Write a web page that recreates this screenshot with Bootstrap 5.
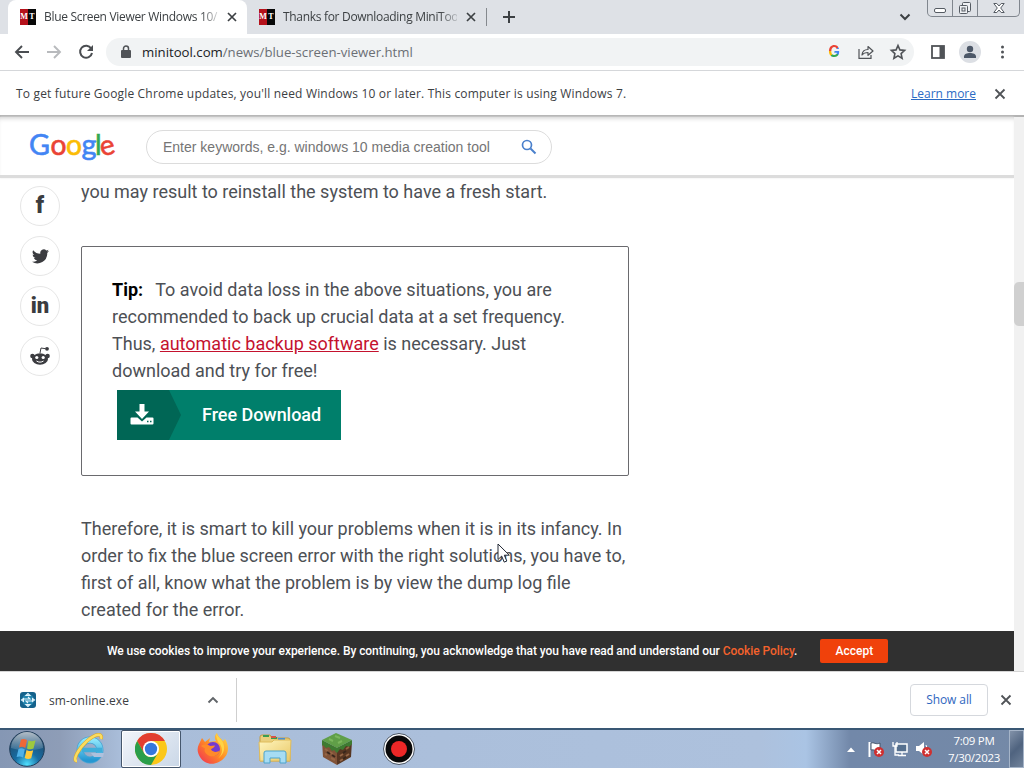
<!DOCTYPE html>
<html lang="en">

<head>
    <meta charset="UTF-8">
    <meta name="viewport" content="width=device-width, initial-scale=1.0">
    <title>Blue Screen Viewer Windows 10</title>
    <!-- Bootstrap CSS -->
    <link href="https://cdn.jsdelivr.net/npm/bootstrap@5.3.2/dist/css/bootstrap.min.css" rel="stylesheet">
    <style>
        body {
            width: 1024px;
            height: 768px;
            overflow: hidden;
            font-family: "Open Sans", "Noto Sans", sans-serif;
            font-size: 12px;
            line-height: 18px;
            color: #3c4043;
            background: #fff;
        }

        svg {
            display: block;
            flex: none;
        }

        /* Tabs */
        .tab-strip {
            height: 34px;
            background: #dee1e6;
            padding-left: 8px;
        }

        .tab-item {
            width: 239px;
            padding: 0 8px 0 12px;
        }

        .tab-item.is-active {
            background: #fff;
            border-radius: 8px 8px 0 0;
        }

        .tab-title {
            width: 174px;
            margin-left: 8px;
            white-space: nowrap;
            letter-spacing: -.31px;
            -webkit-mask-image: linear-gradient(90deg, #000 90%, rgba(0, 0, 0, .2));
            mask-image: linear-gradient(90deg, #000 90%, rgba(0, 0, 0, .2));
        }

        .favicon {
            width: 16px;
            height: 16px;
            flex: none;
            background: linear-gradient(90deg, #b5121b 50%, #080808 50%);
            color: #fff;
            font: bold 8px/16px "Liberation Serif", serif;
            display: flex;
        }

        .favicon span {
            width: 8px;
            text-align: center;
        }

        .win-buttons {
            height: 17px;
            width: 93px;
            border: 1px solid #80868e;
            border-top: 0;
            border-radius: 0 0 5px 5px;
            margin-right: 4px;
        }

        .win-buttons div {
            display: flex;
            align-items: center;
            justify-content: center;
        }

        .win-buttons div+div {
            border-left: 1px solid #80868e;
        }

        /* Toolbar */
        .toolbar {
            height: 37px;
            padding-left: 14px;
            border-bottom: 1px solid #d5d7da;
        }

        .address {
            width: 808px;
            height: 28px;
            border-radius: 14px;
            background: #f1f3f4;
            padding: 0 7px 0 15px;
            margin-left: 12px;
            font-size: 13.2px;
            color: #202124;
        }

        .address .path {
            color: #6b6f74;
        }

        .google-g {
            font: 700 15.5px/18px "Inter", sans-serif;
            background: conic-gradient(from 45deg, #4285f4 0 22%, #34a853 22% 48%, #fbbc05 48% 66%, #ea4335 66%);
            -webkit-background-clip: text;
            background-clip: text;
            color: transparent;
        }

        .avatar {
            width: 22px;
            height: 22px;
            border-radius: 50%;
            background: #dcdfe4;
            overflow: hidden;
        }

        .info-bar {
            height: 46px;
            padding: 1px 17px 0 16px;
            border-bottom: 2px solid #b3b3b3;
        }

        .info-bar .notice {
            letter-spacing: .175px;
        }

        .info-bar a {
            color: #2b6bc4;
            margin-right: 17px;
            font-size: 12px;
        }

        /* Web page */
        .web-page {
            height: 554px;
            font-family: Roboto, sans-serif;
        }

        .site-header {
            height: 61px;
            padding: 2px 0 0 30px;
            border-bottom: 3px solid #dcdcdc;
            box-shadow: 0 0 2px #e8e8e8, inset 0 4px 5px -3px #ccc;
        }

        .site-logo {
            overflow: visible;
            margin-top: 2px;
        }

        .search-box {
            width: 406px;
            height: 34px;
            margin-left: 30px;
            padding: 0 14px 0 16px;
            border: 1px solid #dcdcdc;
            border-radius: 17px;
            font-family: "Liberation Sans", sans-serif;
            font-size: 14px;
            color: #757575;
        }

        .page-body {
            height: 453px;
            overflow: hidden;
        }

        .share-list {
            width: 41px;
            margin-left: 20px;
            padding-top: 8px;
            gap: 10px;
        }

        .share-btn {
            width: 40px;
            height: 40px;
            border: 1px solid #e6e6e6;
            border-radius: 50%;
            display: flex;
            align-items: center;
            justify-content: center;
            color: #3b3c40;
            font-weight: 900;
        }

        .article {
            width: 560px;
            margin-left: 20px;
            font-size: 18px;
            line-height: 27px;
            color: #4d5055;
            white-space: nowrap;
        }

        .tip-box {
            width: 548px;
            height: 230px;
            margin: 41px 0 39px;
            padding: 29px 30px;
            border: 1px solid #6a6a6e;
            border-radius: 2px;
        }

        .tip-box strong {
            color: #000;
            margin-right: 8px;
        }

        .tip-box a {
            color: #c4122e;
        }

        .download-btn {
            width: 224px;
            height: 50px;
            margin: 6px 0 0 5px;
            background: #007f6b;
            color: #fff;
            font-weight: 500;
        }

        .download-btn .btn-text {
            margin: 0 0 2px 21px;
            letter-spacing: -.04px;
        }

        .download-icon {
            width: 64px;
            height: 50px;
            background: #006655;
            clip-path: polygon(0 0, 52px 0, 100% 50%, 52px 100%, 0 100%);
            padding-left: 13px;
        }

        .cookie-bar {
            height: 40px;
            padding-left: 107px;
            background: #303030;
            color: #fff;
            font-weight: 500;
            white-space: nowrap;
        }

        .cookie-bar .cookie-text {
            letter-spacing: -.058px;
        }

        .cookie-bar b {
            color: #f4622c;
            font-weight: 500;
        }

        .accept-btn {
            width: 68px;
            height: 24px;
            margin-left: 23px;
            border-radius: 2px;
            background: #f0410b;
            text-align: center;
            line-height: 24px;
        }

        .scroll-track {
            width: 10px;
            background: #f1f1f1;
            padding-top: 165px;
        }

        .scroll-thumb {
            height: 44px;
            border-radius: 5px 0 0 5px;
            background: #d0d0d0;
        }

        /* Downloads */
        .download-shelf {
            height: 57px;
            border-top: 1px solid #d5d5d5;
            padding-bottom: 1px;
        }

        .download-item {
            width: 237px;
            height: 44px;
            padding: 0 17px 0 20px;
            border-right: 1px solid #cfcfcf;
        }

        .download-item .file-name {
            margin: 2px 0 0 13px;
            letter-spacing: .14px;
        }

        .show-all {
            width: 78px;
            height: 32px;
            border: 1px solid #d5d8dd;
            border-radius: 4px;
            color: #2f66c0;
            text-align: center;
            line-height: 30px;
            letter-spacing: -.1px;
        }

        /* Taskbar */
        .taskbar {
            height: 40px;
            border-top: 2px solid #395774;
            background: linear-gradient(90deg, #8597b4 0, #8e9db7 60px, #a9bdd9 120px, #adc1dd 760px, #aac4e4 806px, #7288a9 850px, #7489a7 1024px);
            color: #fff;
        }

        .task-item {
            width: 61px;
            height: 38px;
            display: flex;
            align-items: center;
            justify-content: center;
        }

        .task-item.is-open {
            width: 60px;
            border: 1px solid #45566c;
            border-radius: 2px;
            background: linear-gradient(135deg, #f2f5fa, #cad7e7);
            box-shadow: inset 0 0 0 1px #fff;
        }

        .clock {
            width: 64px;
            text-align: center;
            line-height: 17px;
            font-size: 11.5px;
            letter-spacing: -.25px;
        }

        .show-desktop {
            width: 15px;
            height: 38px;
            border: 1px solid #a5b4c8;
            background: linear-gradient(135deg, #8292a9, #4f637f 50%, #71839b);
        }

        .cursor {
            left: 497px;
            top: 543px;
        }
    </style>
    <script src="https://cdn.jsdelivr.net/npm/bootstrap@5.3.3/dist/js/bootstrap.bundle.min.js"></script>
</head>

<body>
    <!-- Tab strip -->
    <div class="tab-strip d-flex align-items-stretch">
        <div class="tab-item is-active d-flex align-items-center">
            <div class="favicon"><span>M</span><span>T</span></div>
            <div class="tab-title">Blue Screen Viewer Windows 10/</div>
            <svg class="ms-auto" width="14" height="14" viewBox="0 0 14 14" stroke="#3c4043" stroke-width="1.7"><path d="M3 3l8 8M11 3l-8 8" /></svg>
        </div>
        <div class="tab-item d-flex align-items-center">
            <div class="favicon"><span>M</span><span>T</span></div>
            <div class="tab-title">Thanks for Downloading MiniToo</div>
            <svg class="ms-auto" width="14" height="14" viewBox="0 0 14 14" stroke="#3c4043" stroke-width="1.7"><path d="M3 3l8 8M11 3l-8 8" /></svg>
        </div>
        <svg class="align-self-center" width="32" height="20" viewBox="0 0 32 20" stroke="#3c4043" fill="none"><path d="M.5 1v18" stroke="#85898e" /><path d="M17 10h12M23 4v12" stroke-width="2" /></svg>
        <svg class="ms-auto me-3 align-self-center" width="12" height="12" viewBox="0 0 12 12" fill="none" stroke="#3c4043" stroke-width="2"><path d="M1.500 3.500L6 8l4.500-4.500" /></svg>
        <div class="win-buttons d-flex">
            <div style="width:24px"><svg width="12" height="16" viewBox="0 0 12 16"><rect x=".5" y="8.500" width="11" height="4" rx="1.500" fill="#fff" stroke="#555b63" /></svg></div>
            <div style="width:25px"><svg width="14" height="16" viewBox="0 0 14 16" fill="#eef0f3" stroke="#555b63"><rect x="4.500" y="2.500" width="8" height="9" rx="1" /><rect x="1.500" y="5.500" width="8" height="8" rx="1" /><rect x="4" y="8" width="3" height="3" /></svg></div>
            <div class="flex-fill"><svg width="12" height="16" viewBox="0 0 12 16"><path d="M.8 3.500h3L6 6l2.200-2.500h3L7.700 8l3.500 4.500h-3L6 10l-2.200 2.500h-3L4.300 8z" fill="#fff" stroke="#555b63" /></svg></div>
        </div>
    </div>

    <!-- Toolbar -->
    <div class="toolbar d-flex align-items-center">
        <svg width="16" height="16" viewBox="0 0 16 16" fill="none" stroke="#4a4d51" stroke-width="1.900"><path d="M15 8H2M8 2L2 8l6 6" /></svg>
        <svg style="margin-left:16px" width="16" height="16" viewBox="0 0 16 16" fill="none" stroke="#b8babd" stroke-width="1.900"><path d="M1 8h13M8 2l6 6-6 6" /></svg>
        <svg style="margin-left:16px" width="16" height="16" viewBox="0 0 16 16" fill="none" stroke="#4a4d51" stroke-width="2"><path d="M13.200 4.500A6 6 0 1 0 14 9" /><path d="M15 1v6H9z" fill="#4a4d51" stroke="none" /></svg>
        <div class="address d-flex align-items-center">
            <svg width="10" height="14" viewBox="0 0 10 14"><rect y="5" width="10" height="8" rx="1" fill="#505357" /><path d="M2.500 6V3.500a2.500 2.500 0 0 1 5 0V6" fill="none" stroke="#505357" stroke-width="1.500" /></svg>
            <span class="url" style="margin-left:11px">minitool.com<span class="path">/news/blue-screen-viewer.html</span></span>
            <span class="google-g ms-auto">G</span>
            <svg style="margin-left:18px" width="16" height="16" viewBox="0 0 16 16" fill="none" stroke="#505357" stroke-width="1.200"><path d="M1 5v9.400h12V11" /><path d="M4 11c.3-4 2.500-5.500 6-5.500v-3l5 4.500-5 4.300V8.500C7.500 8.500 5.500 9 4 11z" stroke-linejoin="round" /></svg>
            <svg style="margin-left:15px" width="18" height="18" viewBox="0 0 18 18" fill="none" stroke="#505357" stroke-width="1.600"><path d="M9 2.500l1.900 4.400 4.700.5-3.500 3.200 1 4.700L9 12.900l-4.100 2.400 1-4.700-3.500-3.200 4.700-.5z" /></svg>
        </div>
        <svg style="margin-left:17px" width="14" height="14" viewBox="0 0 14 14"><rect x="1" y="1" width="12" height="12" fill="none" stroke="#505357" stroke-width="1.800" /><path d="M8.500 1H13v12H8.500z" fill="#505357" /></svg>
        <div class="avatar" style="margin-left:14px"><svg width="22" height="22" viewBox="0 0 22 22" fill="#4d5868"><circle cx="11" cy="8" r="3.200" /><path d="M5 17v-1.500c0-2.500 3-3.500 6-3.500s6 1 6 3.500V17z" /></svg></div>
        <svg style="margin-left:19px" width="5" height="16" viewBox="0 0 5 16" fill="#505357"><circle cx="2.500" cy="3" r="1.500" /><circle cx="2.500" cy="8" r="1.500" /><circle cx="2.500" cy="13" r="1.500" /></svg>
    </div>

    <!-- Update notice -->
    <div class="info-bar d-flex align-items-center">
        <span class="notice">To get future Google Chrome updates, you'll need Windows 10 or later. This computer is using Windows 7.</span>
        <a href="#" class="ms-auto">Learn more</a>
        <svg width="14" height="14" viewBox="0 0 14 14" stroke="#505357" stroke-width="1.800"><path d="M2.500 2.500l9 9M11.500 2.500l-9 9" /></svg>
    </div>

    <!-- Page -->
    <div class="web-page d-flex">
        <div class="flex-fill">
            <div class="site-header d-flex align-items-center">
                <svg class="site-logo" width="86" height="34" viewBox="0 0 86 34" font-family="Lato, sans-serif" font-size="28" stroke-width=".6">
                    <text x="-1" y="24" textLength="21" lengthAdjust="spacingAndGlyphs" fill="#4285f4" stroke="#4285f4" font-size="29">G</text>
                    <text x="20.500" y="24" fill="#ea4335" stroke="#ea4335" textLength="16" lengthAdjust="spacingAndGlyphs">o</text>
                    <text x="36" y="24" fill="#fbbc05" stroke="#fbbc05" textLength="16" lengthAdjust="spacingAndGlyphs">o</text>
                    <text x="51.500" y="24" fill="#4285f4" stroke="#4285f4" textLength="15" lengthAdjust="spacingAndGlyphs">g</text>
                    <text x="65" y="24" fill="#34a853" stroke="#34a853">l</text>
                    <text x="70" y="24" fill="#ea4335" stroke="#ea4335" transform="rotate(-14 77 17)">e</text>
                </svg>
                <div class="search-box d-flex align-items-center">
                    <span class="hint">Enter keywords, e.g. windows 10 media creation tool</span>
                    <svg class="ms-auto" width="16" height="16" viewBox="0 0 16 16" fill="none" stroke="#4a80cc" stroke-width="1.700"><circle cx="6" cy="6" r="4.500" /><path d="M9.500 9.500l5 5" stroke-width="2" /></svg>
                </div>
            </div>
            <div class="page-body d-flex">
                <div class="share-list d-flex flex-column">
                    <div class="share-btn" style="font-size:23px">f</div>
                    <div class="share-btn"><svg width="17" height="15" viewBox="0 0 24 20" fill="#3b3c40"><path d="M24 2.400a9.800 9.800 0 0 1-2.800.8A4.900 4.900 0 0 0 23.300.5a9.900 9.900 0 0 1-3.100 1.200 4.900 4.900 0 0 0-8.400 4.500A14 14 0 0 1 1.700 1a4.900 4.900 0 0 0 1.500 6.600A4.900 4.900 0 0 1 1 7v.1a4.900 4.900 0 0 0 3.900 4.800 4.900 4.900 0 0 1-2.200.1 4.900 4.900 0 0 0 4.600 3.400A9.900 9.900 0 0 1 0 17.500 14 14 0 0 0 21.500 5z" /></svg></div>
                    <div class="share-btn" style="font-size:22px">in</div>
                    <div class="share-btn"><svg width="20" height="20" viewBox="0 0 20 20"><ellipse cx="10" cy="13" rx="8" ry="5.800" fill="#3b3c40" /><circle cx="2.400" cy="10" r="2.200" fill="#3b3c40" /><circle cx="17.600" cy="10" r="2.200" fill="#3b3c40" /><path d="M10 7l1-5 4.500.7" fill="none" stroke="#3b3c40" /><circle cx="17" cy="2.800" r="1.900" fill="#3b3c40" /><circle cx="6.800" cy="11.500" r="1.600" fill="#fff" /><circle cx="13.200" cy="11.500" r="1.600" fill="#fff" /><path d="M6.500 15c2 1.500 5 1.500 7 0" fill="none" stroke="#fff" /></svg></div>
                </div>
                <div class="article">
                    <div class="first-line">you may result to reinstall the system to have a fresh start.</div>
                    <div class="tip-box">
                        <strong>Tip:</strong> To avoid data loss in the above situations, you are<br>
                        recommended to back up crucial data at a set frequency.<br>
                        Thus, <a href="#">automatic backup software</a> is necessary. Just<br>
                        download and try for free!
                        <div class="download-btn d-flex align-items-center">
                            <div class="download-icon d-flex align-items-center"><svg width="24" height="24" viewBox="0 0 24 24" fill="#fff"><path d="M9.500 1h5v7.500H19L12 16 5 8.500h4.500z" /><path d="M1.500 14.500h6l4.500 4 4.500-4h6A1 1 0 0 1 23.500 15.500v5a1 1 0 0 1-1 1h-21a1 1 0 0 1-1-1v-5a1 1 0 0 1 1-1z" /><path d="M17 18.500h1.500M20 18.500h1.500" stroke="#006655" stroke-width="1.500" /></svg></div>
                            <span class="btn-text">Free Download</span>
                        </div>
                    </div>
                    <div>Therefore, it is smart to kill your problems when it is in its infancy. In<br>
                        order to fix the blue screen error with the right solutions, you have to,<br>
                        first of all, know what the problem is by view the dump log file<br>
                        created for the error.</div>
                </div>
            </div>
            <div class="cookie-bar d-flex align-items-center">
                <span class="cookie-text">We use cookies to improve your experience. By continuing, you acknowledge that you have read and understand our <b>Cookie Policy</b>.</span>
                <div class="accept-btn">Accept</div>
            </div>
        </div>
        <div class="scroll-track">
            <div class="scroll-thumb"></div>
        </div>
    </div>

    <!-- Download shelf -->
    <div class="download-shelf d-flex align-items-center">
        <div class="download-item d-flex align-items-center">
            <svg width="16" height="16" viewBox="0 0 16 16"><rect width="16" height="16" rx="3" fill="#15628c" /><circle cx="8" cy="8" r="6" fill="#2386b0" /><path d="M3 7h7l-2-2M13 9H6l2 2M8 1.500l-2 2h4zM8 14.500l-2-2h4zM1.500 8l2-1.500v3zM14.500 8l-2-1.500v3z" fill="none" stroke="#e6f7ff" stroke-width="1.100" /></svg>
            <span class="file-name">sm-online.exe</span>
            <svg class="ms-auto" width="12" height="12" viewBox="0 0 12 12" fill="none" stroke="#606468" stroke-width="1.900"><path d="M1.500 8.500L6 4l4.500 4.500" /></svg>
        </div>
        <div class="show-all ms-auto">Show all</div>
        <svg style="margin:0 11px" width="14" height="14" viewBox="0 0 14 14" stroke="#505357" stroke-width="1.800"><path d="M2.500 2.500l9 9M11.500 2.500l-9 9" /></svg>
    </div>

    <!-- Taskbar -->
    <div class="taskbar d-flex align-items-center">
        <!-- start -->
        <div class="task-item" style="width:54px"><svg width="36" height="36" viewBox="0 0 36 36">
                <defs>
                    <radialGradient id="orb" cy=".95" r=".9"><stop stop-color="#4fe0ff" /><stop offset=".4" stop-color="#176ca2" /><stop offset="1" stop-color="#234665" /></radialGradient>
                    <linearGradient id="shine" x2="0" y2="1"><stop stop-color="#fff" stop-opacity=".65" /><stop offset="1" stop-color="#fff" stop-opacity=".1" /></linearGradient>
                    <linearGradient id="fox" x1="1" y1="0" x2="0" y2="1"><stop stop-color="#ffe14a" /><stop offset=".5" stop-color="#ff8b23" /><stop offset="1" stop-color="#f02b59" /></linearGradient>
                    <linearGradient id="folder" x2="1" y2="1"><stop stop-color="#fff6bf" /><stop offset="1" stop-color="#e9c765" /></linearGradient>
                    <linearGradient id="ieblue" x2="0" y2="1"><stop stop-color="#8de6fb" /><stop offset="1" stop-color="#2597d2" /></linearGradient>
                </defs>
                <circle cx="18" cy="18" r="17.300" fill="url(#orb)" stroke="#1f3c58" />
                <path d="M2 17a16 16 0 0 1 32 0c-10 3-22 3-32 0z" fill="url(#shine)" />
                <path d="M12 8.500c2-1 4-.7 6 .5l-1.700 8c-2-1.300-4-1.500-6.300-.6z" fill="#ef6837" />
                <path d="M19.500 9.500c2 1 4.500 1 7-.2l-2 8.200c-2 1-4.500 1-6.500-.1z" fill="#9ec93f" />
                <path d="M9.500 18c2-1 4.200-.8 6.300.5l-1.800 8c-2-1.200-4-1.500-6.400-.5z" fill="#4eb1e8" />
                <path d="M17.500 19c2 1.200 4.500 1.200 6.700.2l-2 8c-2.200 1-4.500.9-6.500-.3z" fill="#ffca3b" />
            </svg></div>
        <!-- explorer -->
        <div class="task-item" style="width:67px"><svg width="32" height="32" viewBox="0 0 32 32" style="margin-left:2px" fill="none">
                <circle cx="17" cy="17" r="10" stroke="#4ba4d3" stroke-width="7" />
                <circle cx="17" cy="17" r="10" stroke="url(#ieblue)" stroke-width="5.500" />
                <path d="M18 20h13l-1 4h-9z" fill="#aec1dd" />
                <path d="M9 17h20" stroke="#40aeda" stroke-width="4.500" />
                <path d="M4 28C-1 28 5 16 14 8S30 0 28 6" stroke="#d6a42a" stroke-width="3.500" />
                <path d="M4 28C-1 28 5 16 14 8S30 0 28 6" stroke="#fbdc5e" stroke-width="2.500" />
            </svg></div>
        <!-- chrome -->
        <div class="task-item is-open"><svg width="32" height="32" viewBox="0 0 32 32">
                <circle cx="16" cy="16" r="16" fill="#fbc719" />
                <path d="M2.140 8L9.070 20 16 16 16 8h13.860A16 16 0 0 0 2.140 8z" fill="#e23d30" />
                <path d="M2.140 8A16 16 0 0 0 16 32l6.930-12A8 8 0 0 1 9.070 20z" fill="#299e4a" />
                <circle cx="16" cy="16" r="8" fill="#fff" /><circle cx="16" cy="16" r="6.200" fill="#3577dc" />
            </svg></div>
        <!-- firefox -->
        <div class="task-item" style="width:64px"><svg width="32" height="32" viewBox="0 0 32 32">
                <path d="M2 11l3-6 3 4 5-4-1 4 7-1c-2-3-1-6 1-8 1 4 4 5 6 8l2-2c4 6 4 13 0 18-7 9-20 9-25 0-3-5-3-9-1-13z" fill="url(#fox)" />
                <circle cx="16" cy="16" r="7" fill="#743bd0" />
                <path d="M4 13c4-3 8-1 9 0l5-.5c-1 3-4 3-4 4 3 4 7 2 9 1-2 6-9 8-14 3-1-1-2-3-1-5z" fill="#ff8a29" />
                <path d="M19 0c1 4 7 6 8 13 1 6-3 11-7 13 6-4 6-10 3-15-2-1-4-7-4-11z" fill="#ffd445" />
            </svg></div>
        <!-- files -->
        <div class="task-item" style="width:60px"><svg width="34" height="32" viewBox="0 0 34 32">
                <path d="M2 4q0-2 2-2h8l2 3h16q2 0 2 2v21H2z" fill="#e9cf7d" stroke="#c29c42" />
                <path d="M5 3h6M13 5h6" stroke="#3a9d50" stroke-width="2" /><path d="M13 4h5" stroke="#d75545" stroke-width="2" /><path d="M20 6h7" stroke="#4a8fd2" stroke-width="2" />
                <path d="M1 9h13l2-2h17l-1 21H2z" fill="url(#folder)" stroke="#dfbc5c" />
                <path d="M6 30V20q0-2 2-2h18q2 0 2 2v10h-6v-5H12v5z" fill="#a6dcf3" stroke="#4da3cc" />
            </svg></div>
        <!-- grass block -->
        <div class="task-item" style="width:63px"><svg width="32" height="32" viewBox="0 0 32 32">
                <path d="M1 8l15 7v17L2 24z" fill="#805238" /><path d="M31 8l-15 7v17l14-8z" fill="#573622" />
                <path d="M15 0L1 7l15 8 15-8z" fill="#609f48" /><path d="M1 7l15 8v5l-3-3-2 1-3-4-3 1-3-3-1 1zM31 7l-15 8v5l3-4 3 1 3-4 3 1 3-3z" fill="#3e7b31" />
                <path d="M4 16l3 2M9 19l3 2M4 21l2 1M10 25l4 2M19 23l3-2M25 16l3-2M25 23l3-2M19 28l3-2" stroke="#946545" stroke-width="2" />
                <path d="M6 19l3 2M11 22l3 2M22 20l3-2M22 26l3-2" stroke="#39271c" stroke-width="2" />
                <path d="M8 6l4 2M14 3l5 2M17 10l4-2" stroke="#7bb75d" stroke-width="2" />
            </svg></div>
        <!-- recorder -->
        <div class="task-item"><svg width="32" height="32" viewBox="0 0 32 32"><circle cx="16" cy="16" r="15.500" fill="#fff" stroke="#4b5664" /><circle cx="16" cy="16" r="13.500" fill="#080808" /><circle cx="16" cy="16" r="8" fill="#ec2727" /></svg></div>
        <!-- tray -->
        <svg class="ms-auto" width="8" height="5" viewBox="0 0 8 5"><path d="M0 5l4-4.500L8 5z" fill="#fff" /></svg>
        <svg style="margin-left:13px" width="16" height="16" viewBox="0 0 16 16"><path d="M1.500 1v15" stroke="#fff" stroke-width="2" /><path d="M3 2c3-1 5 2 9 0v7c-4 2-6-1-9 0z" fill="#fff" stroke="#46566c" /><circle cx="11" cy="11" r="5" fill="#cf3030" /><path d="M9 9l4 4M13 9l-4 4" stroke="#fff" stroke-width="1.500" /></svg>
        <svg style="margin-left:8px" width="16" height="16" viewBox="0 0 16 16" fill="none"><rect x="4" y="3" width="11" height="8" fill="#56708f" stroke="#fff" stroke-width="1.500" /><path d="M6 14.500h8M10 11v3M1 1v4h4V1M3 5v9h4" stroke="#fff" stroke-width="1.300" /></svg>
        <svg style="margin-left:8px" width="16" height="16" viewBox="0 0 16 16"><path d="M0 5h3l5-4v13L3 10H0z" fill="#fff" /><path d="M10 4q2 3 0 7" fill="none" stroke="#fff" /><circle cx="11" cy="11" r="5" fill="#cf3030" /><path d="M9 9l4 4M13 9l-4 4" stroke="#fff" stroke-width="1.500" /></svg>
        <div class="clock" style="margin:0 3px 0 10px">7:09 PM<br>7/30/2023</div>
        <div class="show-desktop"></div>
    </div>

    <!-- Mouse pointer -->
    <svg class="cursor position-absolute" width="14" height="21" viewBox="0 0 14 21"><path d="M1 1v15.500l3.700-3.400 2.500 6 2.600-1.100-2.500-5.800h5z" fill="#fff" stroke="#222834" /></svg>
</body>

</html>
